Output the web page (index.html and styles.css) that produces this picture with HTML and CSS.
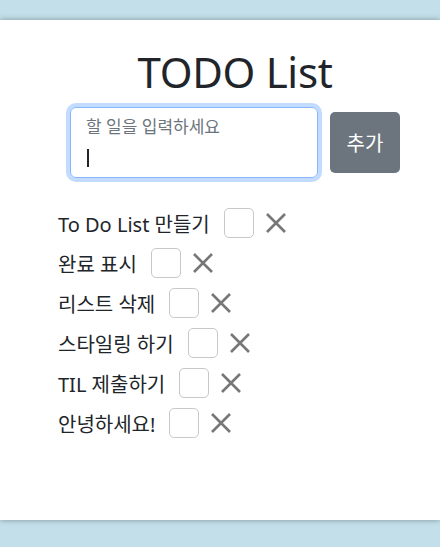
FILE: index.html
```html
<!DOCTYPE html>
<html>
<head>
<meta charset="utf-8">
<title>TODO List</title>
<link rel="stylesheet" href="styles.css">
</head>

<body>
<div id="wrapper">
	<h1 class="title">TODO List</h1>
	<div class="form-row">
		<div class="field">
			<span class="field-label">할 일을 입력하세요</span>
			<span class="caret"></span>
		</div>
		<button class="add-btn">추가</button>
	</div>
	<ul class="todo-list">
		<li class="todo"><span class="todo-text">To Do List 만들기</span><span class="check"></span><span class="del"><svg viewBox="0 0 20 20" width="20" height="20"><path d="M1 1 L19 19 M19 1 L1 19" /></svg></span></li>
		<li class="todo"><span class="todo-text">완료 표시</span><span class="check"></span><span class="del"><svg viewBox="0 0 20 20" width="20" height="20"><path d="M1 1 L19 19 M19 1 L1 19" /></svg></span></li>
		<li class="todo"><span class="todo-text">리스트 삭제</span><span class="check"></span><span class="del"><svg viewBox="0 0 20 20" width="20" height="20"><path d="M1 1 L19 19 M19 1 L1 19" /></svg></span></li>
		<li class="todo"><span class="todo-text">스타일링 하기</span><span class="check"></span><span class="del"><svg viewBox="0 0 20 20" width="20" height="20"><path d="M1 1 L19 19 M19 1 L1 19" /></svg></span></li>
		<li class="todo"><span class="todo-text">TIL 제출하기</span><span class="check"></span><span class="del"><svg viewBox="0 0 20 20" width="20" height="20"><path d="M1 1 L19 19 M19 1 L1 19" /></svg></span></li>
		<li class="todo"><span class="todo-text">안녕하세요!</span><span class="check"></span><span class="del"><svg viewBox="0 0 20 20" width="20" height="20"><path d="M1 1 L19 19 M19 1 L1 19" /></svg></span></li>
	</ul>
</div>
</body>
</html>
```

FILE: styles.css
```css
html, body {
	margin: 0px;
	padding: 0px;
}
body {
	background: #c3e0ea;
	padding: 20px 0px 27px;
	font-family: "Noto Sans", "Noto Sans CJK KR", sans-serif;
	color: #212529;
}
#wrapper {
	height: 500px;
	background: #fff;
	box-shadow: 0px 0px 6px rgba(0,0,0,0.35);
	padding-left: 30px;
	box-sizing: border-box;
	overflow: hidden;
}
.title {
	margin: 0px;
	padding-top: 25px;
	font-size: 42px;
	font-weight: 400;
	letter-spacing: -0.3px;
	line-height: 53px;
	text-align: center;
}
.form-row {
	display: flex;
	justify-content: center;
	align-items: center;
	gap: 12px;
	margin-top: 9px;
}
.field {
	width: 248px;
	height: 71px;
	box-sizing: border-box;
	border: 1px solid #86b7fe;
	border-radius: 6px;
	box-shadow: 0px 0px 0px 4px rgba(13,110,253,0.25);
	padding: 8px 15px 0px;
	display: flex;
	flex-direction: column;
}
.field-label {
	font-size: 17px;
	line-height: 22px;
	color: #6c757d;
}
.caret {
	width: 2px;
	height: 18px;
	margin-top: 11px;
	margin-left: 1px;
	background: #212529;
}
.add-btn {
	width: 70px;
	height: 61px;
	background: #6c757d;
	color: #fff;
	border: none;
	border-radius: 5px;
	font-family: inherit;
	font-size: 20px;
	padding: 0px;
}
.todo-list {
	list-style: none;
	margin: 25px 0px 0px;
	padding: 0px 0px 0px 28px;
}
.todo {
	height: 40px;
	display: flex;
	align-items: center;
	font-size: 20px;
}
.check {
	width: 30px;
	height: 30px;
	box-sizing: border-box;
	border: 1px solid #c8c8c8;
	border-radius: 5px;
	margin-left: 14px;
}
.del {
	display: flex;
	margin-left: 12px;
}
.del path {
	stroke: #777;
	stroke-width: 2.6;
	fill: none;
}
```
